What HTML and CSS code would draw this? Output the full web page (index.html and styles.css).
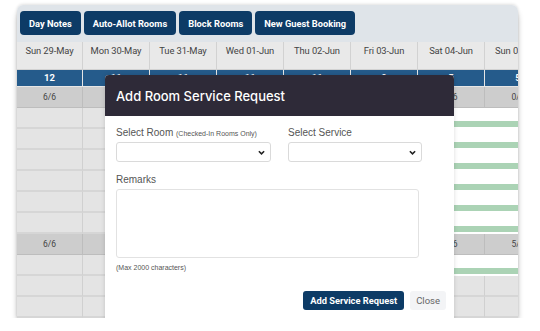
FILE: index.html
```html
<!DOCTYPE html>
<html lang="en">

<head>
    <meta charset="UTF-8">
    <meta name="viewport" content="width=device-width, initial-scale=1.0">
    <title>Room Chart</title>
    <link rel="stylesheet" href="styles.css">
</head>

<body>
    <div class="frame">
        <div class="toolbar">
            <button class="btn">Day Notes</button>
            <button class="btn">Auto-Allot Rooms</button>
            <button class="btn">Block Rooms</button>
            <button class="btn">New Guest Booking</button>
        </div>

        <div class="chart">
            <div class="row dates">
                <div class="cell">Sun 29-May</div>
                <div class="cell">Mon 30-May</div>
                <div class="cell">Tue 31-May</div>
                <div class="cell">Wed 01-Jun</div>
                <div class="cell">Thu 02-Jun</div>
                <div class="cell">Fri 03-Jun</div>
                <div class="cell">Sat 04-Jun</div>
                <div class="cell">Sun 05-Jun</div>
            </div>
            <div class="row counts">
                <div class="cell">12</div>
                <div class="cell">11</div>
                <div class="cell">11</div>
                <div class="cell">11</div>
                <div class="cell">11</div>
                <div class="cell">9</div>
                <div class="cell">5</div>
                <div class="cell">5</div>
            </div>
            <div class="row avail">
                <div class="cell">6/6</div>
                <div class="cell">5/6</div>
                <div class="cell">5/6</div>
                <div class="cell">5/6</div>
                <div class="cell">5/6</div>
                <div class="cell">3/6</div>
                <div class="cell">6/6</div>
                <div class="cell">0/6</div>
            </div>
            <div class="row room"><div class="cell"></div><div class="cell"></div><div class="cell"></div><div class="cell"></div><div class="cell"></div><div class="cell"></div><div class="cell"></div><div class="cell"></div><span class="stay"></span></div>
            <div class="row room"><div class="cell"></div><div class="cell"></div><div class="cell"></div><div class="cell"></div><div class="cell"></div><div class="cell"></div><div class="cell"></div><div class="cell"></div><span class="stay"></span></div>
            <div class="row room"><div class="cell"></div><div class="cell"></div><div class="cell"></div><div class="cell"></div><div class="cell"></div><div class="cell"></div><div class="cell"></div><div class="cell"></div><span class="stay"></span></div>
            <div class="row room"><div class="cell"></div><div class="cell"></div><div class="cell"></div><div class="cell"></div><div class="cell"></div><div class="cell"></div><div class="cell"></div><div class="cell"></div><span class="stay"></span></div>
            <div class="row room"><div class="cell"></div><div class="cell"></div><div class="cell"></div><div class="cell"></div><div class="cell"></div><div class="cell"></div><div class="cell"></div><div class="cell"></div><span class="stay"></span></div>
            <div class="row room"><div class="cell"></div><div class="cell"></div><div class="cell"></div><div class="cell"></div><div class="cell"></div><div class="cell"></div><div class="cell"></div><div class="cell"></div><span class="stay"></span></div>
            <div class="row avail">
                <div class="cell">6/6</div>
                <div class="cell">6/6</div>
                <div class="cell">6/6</div>
                <div class="cell">6/6</div>
                <div class="cell">6/6</div>
                <div class="cell">6/6</div>
                <div class="cell">6/6</div>
                <div class="cell">5/6</div>
            </div>
            <div class="row room"><div class="cell"></div><div class="cell"></div><div class="cell"></div><div class="cell"></div><div class="cell"></div><div class="cell"></div><div class="cell"></div><div class="cell"></div><span class="stay"></span></div>
            <div class="row room"><div class="cell"></div><div class="cell"></div><div class="cell"></div><div class="cell"></div><div class="cell"></div><div class="cell"></div><div class="cell"></div><div class="cell"></div></div>
            <div class="row room"><div class="cell"></div><div class="cell"></div><div class="cell"></div><div class="cell"></div><div class="cell"></div><div class="cell"></div><div class="cell"></div><div class="cell"></div></div>
        </div>

        <div class="modal">
            <div class="modal-head">Add Room Service Request</div>
            <div class="modal-body">
                <div class="fields">
                    <div class="field">
                        <label>Select Room <small>(Checked-In Rooms Only)</small></label>
                        <div class="select">
                            <select></select>
                            <svg viewBox="0 0 8 5" width="7" height="5"><path d="M1 1l3 3 3-3" fill="none" stroke="#222" stroke-width="1.8"/></svg>
                        </div>
                    </div>
                    <div class="field">
                        <label>Select Service</label>
                        <div class="select">
                            <select></select>
                            <svg viewBox="0 0 8 5" width="7" height="5"><path d="M1 1l3 3 3-3" fill="none" stroke="#222" stroke-width="1.8"/></svg>
                        </div>
                    </div>
                </div>
                <label class="remarks">Remarks</label>
                <textarea></textarea>
                <div class="hint">(Max 2000 characters)</div>
                <div class="modal-foot">
                    <button class="btn">Add Service Request</button>
                    <button class="close">Close</button>
                </div>
            </div>
        </div>
    </div>
</body>

</html>
```

FILE: styles.css
```css
body {
    margin: 0;
    padding: 5px 0 0 17px;
    background: #fff;
    font-family: "Liberation Sans", Arial, sans-serif;
}

.frame {
    position: relative;
    width: 501px;
    height: 313px;
    overflow: hidden;
    border-radius: 6px 6px 0 0;
    box-shadow: 0 -1px 3px rgba(0, 0, 0, 0.12), 0 6px 7px -2px rgba(0, 0, 0, 0.45);
}

.toolbar {
    display: flex;
    gap: 3px;
    height: 37px;
    padding: 6px 0 0 3px;
    box-sizing: border-box;
    background: #dfe4e9;
}

.btn {
    height: 24px;
    padding: 0 9px;
    border: 0;
    border-radius: 4px;
    background: #0d3b66;
    color: #fff;
    font-family: Roboto, sans-serif;
    font-weight: 700;
    font-size: 9.3px;
}

.chart {
    width: 540px;
}

.row {
    display: grid;
    grid-template-columns: 66px repeat(7, 67px);
    height: 21px;
}

.cell {
    grid-row: 1;
    border-right: 1px solid #d2d2d2;
    border-bottom: 1px solid #d2d2d2;
    font-family: Roboto, sans-serif;
    text-align: center;
}

.dates .cell {
    padding-top: 3px;
    background: #e9e9e9;
    color: #444;
    font-size: 9.4px;
    letter-spacing: -0.1px;
}

.dates {
    height: 28px;
}

.counts {
    height: 17px;
}

.counts .cell {
    background: #255b8b;
    border-color: #e6e6e6;
    color: #fff;
    font-size: 9.5px;
    font-weight: 700;
    line-height: 16px;
}

.avail .cell {
    background: #cdcdcd;
    border-color: #bdbdbd;
    color: #444;
    font-size: 8.5px;
    line-height: 20px;
}

.room .cell {
    background: #e4e4e4;
    border-right: 1px solid #d0d0d0;
    border-bottom: 2px solid #d6d6d6;
}

.stay {
    grid-row: 1;
    grid-column: 6 / -1;
    align-self: start;
    height: 6px;
    margin-top: 13px;
    background: #abd3b5;
}

.modal {
    position: absolute;
    left: 88px;
    top: 70px;
    width: 349px;
    height: 260px;
    background: #fff;
    border-radius: 4px 4px 0 0;
    box-shadow: 0 0 4px rgba(0, 0, 0, 0.15);
}

.modal-head {
    height: 41px;
    padding: 0 11px;
    line-height: 42px;
    border-radius: 4px 4px 0 0;
    background: #2e2a38;
    color: #fff;
    font-family: Inter, sans-serif;
    font-weight: 500;
    font-size: 13px;
}

.modal-body {
    padding: 11px 8px 0 11px;
}

.fields {
    display: grid;
    grid-template-columns: 155px 134px;
    gap: 17px;
}

label {
    display: block;
    height: 12px;
    margin-bottom: 3px;
    color: #555;
    font-size: 10px;
    line-height: 12px;
}

label small {
    font-size: 7px;
}

.select {
    position: relative;
}

.select select {
    display: block;
    width: 100%;
    height: 20px;
    border: 1px solid #dadada;
    border-radius: 3px;
    background: #fff;
    appearance: none;
}

.select svg {
    position: absolute;
    right: 6px;
    top: 8px;
}

.remarks {
    margin-top: 12px;
}

textarea {
    display: block;
    width: 303px;
    height: 69px;
    box-sizing: border-box;
    border: 1px solid #e2e2e2;
    border-radius: 3px;
    resize: none;
}

.hint {
    margin-top: 5px;
    color: #555;
    font-size: 7px;
    line-height: 9px;
}

.modal-foot {
    display: flex;
    justify-content: flex-end;
    gap: 6px;
    margin-top: 19px;
}

.modal-foot .btn {
    height: 19px;
    padding: 0 7px;
    border-radius: 3px;
}

.close {
    height: 19px;
    padding: 0 6px;
    border: 0;
    border-radius: 3px;
    background: #f3f4f6;
    color: #666;
    font-family: Roboto, sans-serif;
    font-size: 9.5px;
}
```
